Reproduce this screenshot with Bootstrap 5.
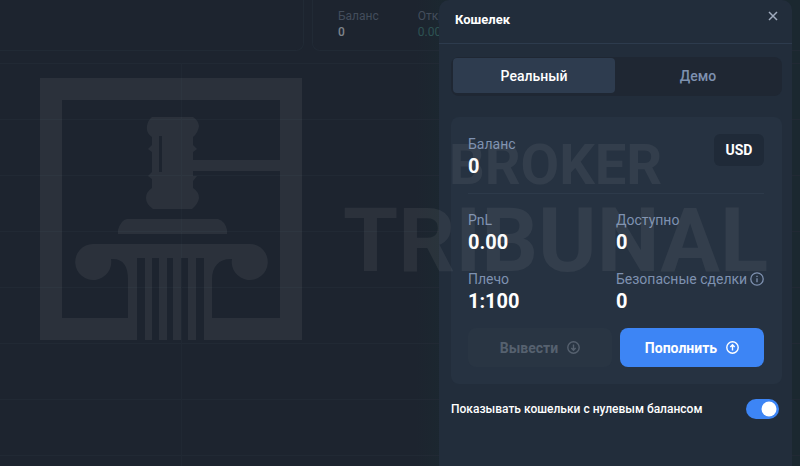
<!DOCTYPE html>
<html lang="ru" data-bs-theme="dark">
<head>
<meta charset="utf-8">
<meta name="viewport" content="width=device-width, initial-scale=1">
<title>Кошелек</title>
<link href="https://cdn.jsdelivr.net/npm/bootstrap@5.3.0/dist/css/bootstrap.min.css" rel="stylesheet">
<style>
  body { background: #1d242f; font-family: Roboto, sans-serif; font-size: 14px; line-height: 20px; color: #fff; }
  .stage { min-height: 100vh; background: linear-gradient(90deg, #1d242f 52%, #1b2830 56%); }
  .strip-panel { border: 1px solid #212a35; border-top: 0; border-radius: 0 0 8px 8px; height: 51px; font-size: 12px; line-height: 16px; padding: 8px 25px; color: #434d5c; }
  .strip-left { flex: 0 0 38%; border-left: 0; border-radius: 0 0 8px 0; }
  .strip-right { border-right: 0; border-radius: 0 0 0 8px; gap: 39px; }
  .strip-value { color: #7f848b; font-weight: 500; }
  .strip-profit { color: #2e5353; }
  .plot { margin-top: 12px; background: repeating-linear-gradient(180deg, #212934 0 1px, transparent 1px 56px); }
  .plot-axis { width: 182px; border-right: 1px solid #202833; }

  .wallet { position: absolute; top: 0; right: 8px; bottom: 0; width: 353px; background: #222d3b; border-radius: 10px 10px 0 0; }
  .wallet-head { height: 44px; padding: 0 14px 4px 16px; border-bottom: 1px solid #2d3b4d; }
  .wallet-title { font-size: 13px; font-weight: 700; }
  .plain-btn { border: 0; background: none; padding: 0; color: #a0abbe; }
  .wallet-body { padding: 13px 10px 0 12px; }
  .tabs { background: #1f2733; border-radius: 8px; padding: 1px 1px 3px 2px; }
  .tab-btn { border: 0; background: none; height: 35px; border-radius: 4px; color: #7e91b0; font-weight: 500; }
  .tab-btn.active { background: #2e3c4f; color: #fff; }
  .tab-btn:first-child { flex: 0 0 162px; }
  .balance-box { background: #263241; border-radius: 8px; margin-top: 21px; padding: 17px 18px 17px 17px; }
  .caption { color: #7e91b0; line-height: 20px; }
  .amount { font-size: 20px; line-height: 24px; font-weight: 700; }
  .currency { background: #1f2a38; border: 0; border-radius: 6px; color: #fff; font-weight: 700; width: 50px; height: 32px; }
  .balance-row { border-bottom: 1px solid #2d3a4a; padding-bottom: 15px; }
  .stats { display: grid; grid-template-columns: 1fr 1fr; row-gap: 15px; margin-top: 16px; }
  .actions { gap: 8px; margin-top: 15px; }
  .action-btn { flex: 1 1 0; height: 39px; border: 0; border-radius: 8px; font-weight: 700; gap: 9px; }
  .action-out { background: #293543; color: #56616f; }
  .action-in { background: #3d85f5; color: #fff; }
  .zero-row { padding: 15px 3px 0 0; min-height: 0; }
  .zero-label { font-size: 12px; font-weight: 500; }
  .zero-row .form-check-input { width: 33px; height: 20px; margin: 0; border: 0; }
  .zero-row .form-check-input:checked { background-color: #3d85f5; }

  .watermark { position: absolute; top: 78px; left: 40px; gap: 41px; color: #c8c8c8; opacity: .08; pointer-events: none; }
  .watermark-text { font-weight: 700; text-align: center; white-space: nowrap; }
  .watermark-small { font-size: 56px; line-height: 64px; }
  .watermark-large { font-size: 89px; line-height: 88px; }
</style>
<script src="https://cdn.jsdelivr.net/npm/bootstrap@5.3.0/dist/js/bootstrap.bundle.min.js"></script>
</head>
<body>
<div class="stage position-relative overflow-hidden d-flex flex-column">
  <header class="d-flex gap-2">
    <div class="strip-panel strip-left"></div>
    <div class="strip-panel strip-right d-flex flex-grow-1">
      <div><div>Баланс</div><div class="strip-value">0</div></div>
      <div><div>Открытый PnL</div><div class="strip-profit">0.00</div></div>
    </div>
  </header>
  <main class="plot flex-grow-1 d-flex"><div class="plot-axis"></div></main>

  <aside class="wallet" aria-label="Кошелек">
    <div class="wallet-head d-flex align-items-center justify-content-between">
      <h1 class="wallet-title m-0">Кошелек</h1>
      <button class="plain-btn d-flex mb-2" type="button" aria-label="Закрыть">
        <svg width="10" height="10" viewBox="0 0 10 10" fill="none" stroke="currentColor" stroke-width="1.5"><path d="M1 1l8 8M9 1l-8 8"/></svg>
      </button>
    </div>
    <div class="wallet-body">
      <div class="tabs d-flex" role="tablist">
        <button class="tab-btn active" type="button" role="tab" aria-selected="true">Реальный</button>
        <button class="tab-btn flex-grow-1" type="button" role="tab" aria-selected="false">Демо</button>
      </div>
      <section class="balance-box">
        <div class="balance-row d-flex justify-content-between align-items-start">
          <div><div class="caption">Баланс</div><div class="amount">0</div></div>
          <button class="currency p-0" type="button">USD</button>
        </div>
        <div class="stats">
          <div><div class="caption">PnL</div><div class="amount">0.00</div></div>
          <div><div class="caption">Доступно</div><div class="amount">0</div></div>
          <div><div class="caption">Плечо</div><div class="amount">1:100</div></div>
          <div>
            <div class="caption d-flex align-items-center justify-content-between text-nowrap">Безопасные сделки
              <svg width="14" height="14" viewBox="0 0 14 14" fill="none" stroke="currentColor" stroke-width="1.3"><circle cx="7" cy="7" r="6.2"/><path d="M7 6.2v4M7 3.7v1.4"/></svg>
            </div>
            <div class="amount">0</div>
          </div>
        </div>
        <div class="actions d-flex">
          <button class="action-btn action-out d-flex align-items-center justify-content-center" type="button" disabled>Вывести
            <svg width="13" height="13" viewBox="0 0 13 13" fill="none" stroke="currentColor" stroke-width="1.4"><circle cx="6.500" cy="6.500" r="5.700"/><path d="M6.500 3.500v5.500M4.300 7l2.200 2.200L8.700 7"/></svg>
          </button>
          <button class="action-btn action-in d-flex align-items-center justify-content-center" type="button">Пополнить
            <svg width="13" height="13" viewBox="0 0 13 13" fill="none" stroke="currentColor" stroke-width="1.4"><circle cx="6.500" cy="6.500" r="5.700"/><path d="M6.500 9.500V4M4.300 6l2.200-2.200L8.700 6"/></svg>
          </button>
        </div>
      </section>
      <div class="zero-row form-check form-switch d-flex align-items-center justify-content-between">
        <label class="zero-label" for="zero">Показывать кошельки с нулевым балансом</label>
        <input class="form-check-input float-none" type="checkbox" role="switch" id="zero" checked>
      </div>
    </div>
  </aside>

  <div class="watermark d-flex align-items-center">
    <svg width="262" height="262" viewBox="0 0 262 262" fill="currentColor" aria-hidden="true">
      <path d="M0 0H262V262H164V240H240V93H153V98L157 98L153 103V110Q159 114 159 120Q158 126 152 131H113Q106 126 106 120Q106 114 112 110V101L108 98L112 94V74L108 71L112 67V59Q106 55 107 48Q108 42 112 39H153Q158 42 159 48Q158 55 153 59V67L157 71L153 74V82H240V22H22V240H88V262H0Z M119 58V94H122V58Z" fill-rule="evenodd"/>
      <path d="M78 156V152Q81 142 87 141H178Q185 143 187 152V156Z"/>
      <path d="M53 166H210A18 18 0 1 1 192 181C180 180 172 188 172 201V262H164V180H156V262H148V180H141V262H133V180H127V262H119V180H112V262H105V180H97V262H88V201C88 188 83 180 71 181A18 18 0 1 1 53 166Z"/>
    </svg>
    <div class="watermark-text" aria-hidden="true">
      <div class="watermark-small">BROKER</div>
      <div class="watermark-large">TRIBUNAL</div>
    </div>
  </div>
</div>
</body>
</html>
